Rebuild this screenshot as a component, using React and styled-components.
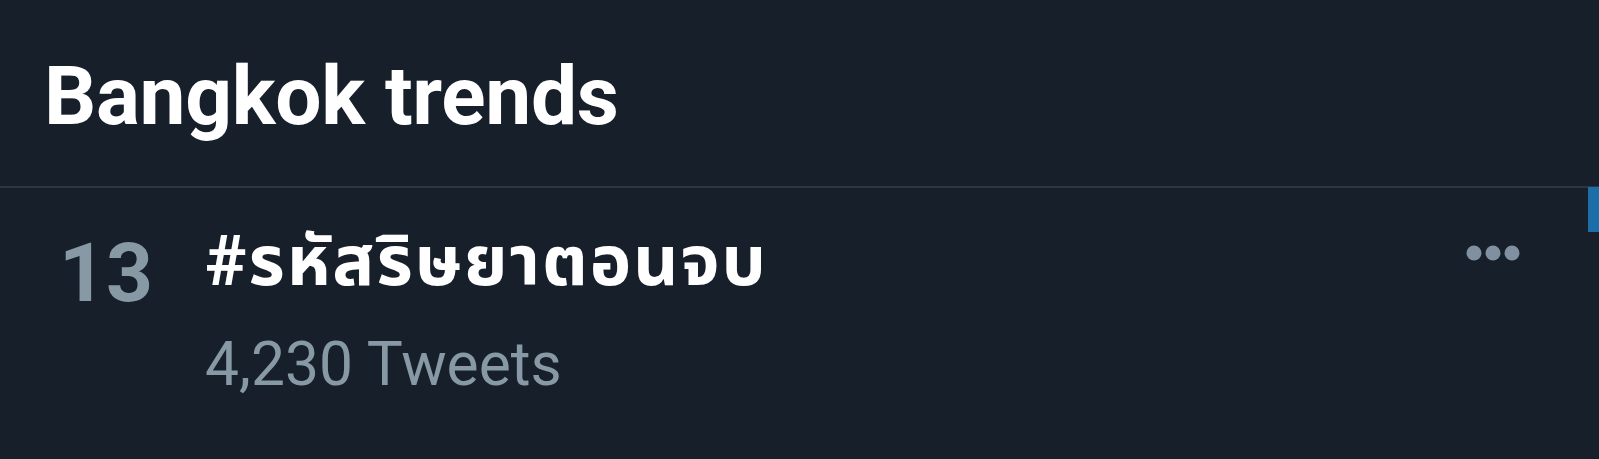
import React from "react";
import styled, { createGlobalStyle } from "styled-components";

const Global = createGlobalStyle`
  html, body { margin: 0; padding: 0; background: #17202a; }
  body { font-family: Roboto, "Noto Sans", sans-serif; }
`;

const Page = styled.div`
  position: relative;
  min-height: 459px;
  background: #17202a;
  overflow: hidden;
`;

const Header = styled.header`
  box-sizing: border-box;
  height: 188px;
  padding: 48px 0 0 44px;
  border-bottom: 2px solid #2c3641;
`;

const Title = styled.h1`
  margin: 0;
  font-family: Roboto, sans-serif;
  font-weight: 700;
  font-size: 82px;
  line-height: 1.172;
  color: #ffffff;
  letter-spacing: -0.3px;
`;

const Row = styled.div`
  display: flex;
  align-items: flex-start;
  padding: 31px 78px 0 59px;
`;

const Rank = styled.div`
  width: 146px;
  flex: none;
  padding-top: 6px;
  font-family: Roboto, sans-serif;
  font-weight: 700;
  font-size: 82px;
  line-height: 1.172;
  color: #8899a6;
`;

const Content = styled.div`
  flex: 1;
  display: flex;
  flex-direction: column;
`;

const Hashtag = styled.div`
  font-family: Roboto, "Noto Sans Thai", "Noto Sans", sans-serif;
  font-weight: 700;
  font-size: 70px;
  line-height: 1.2;
  letter-spacing: 2px;
  color: #ffffff;
`;

const Count = styled.div`
  margin-top: 27px;
  font-family: Roboto, sans-serif;
  font-weight: 400;
  font-size: 60.5px;
  line-height: 1.172;
  color: #8899a6;
`;

const More = styled.button`
  flex: none;
  margin-top: 26px;
  padding: 0;
  border: 0;
  background: transparent;
  display: flex;
`;

const ScrollThumb = styled.div`
  position: absolute;
  right: 0;
  top: 187px;
  width: 11px;
  height: 45px;
  background: #1c6ea8;
`;

function Dots() {
  return (
    <svg width="55" height="16" viewBox="0 0 55 16" aria-hidden="true">
      <circle cx="8" cy="8" r="7.5" fill="#8190a0" />
      <circle cx="27" cy="8" r="7.5" fill="#8190a0" />
      <circle cx="46" cy="8" r="7.5" fill="#8190a0" />
    </svg>
  );
}

export default function App() {
  return (
    <Page>
      <Global />
      <Header>
        <Title>Bangkok trends</Title>
      </Header>
      <Row>
        <Rank>13</Rank>
        <Content>
          <Hashtag>#รหัสริษยาตอนจบ</Hashtag>
          <Count>4,230 Tweets</Count>
        </Content>
        <More aria-label="More">
          <Dots />
        </More>
      </Row>
      <ScrollThumb />
    </Page>
  );
}
